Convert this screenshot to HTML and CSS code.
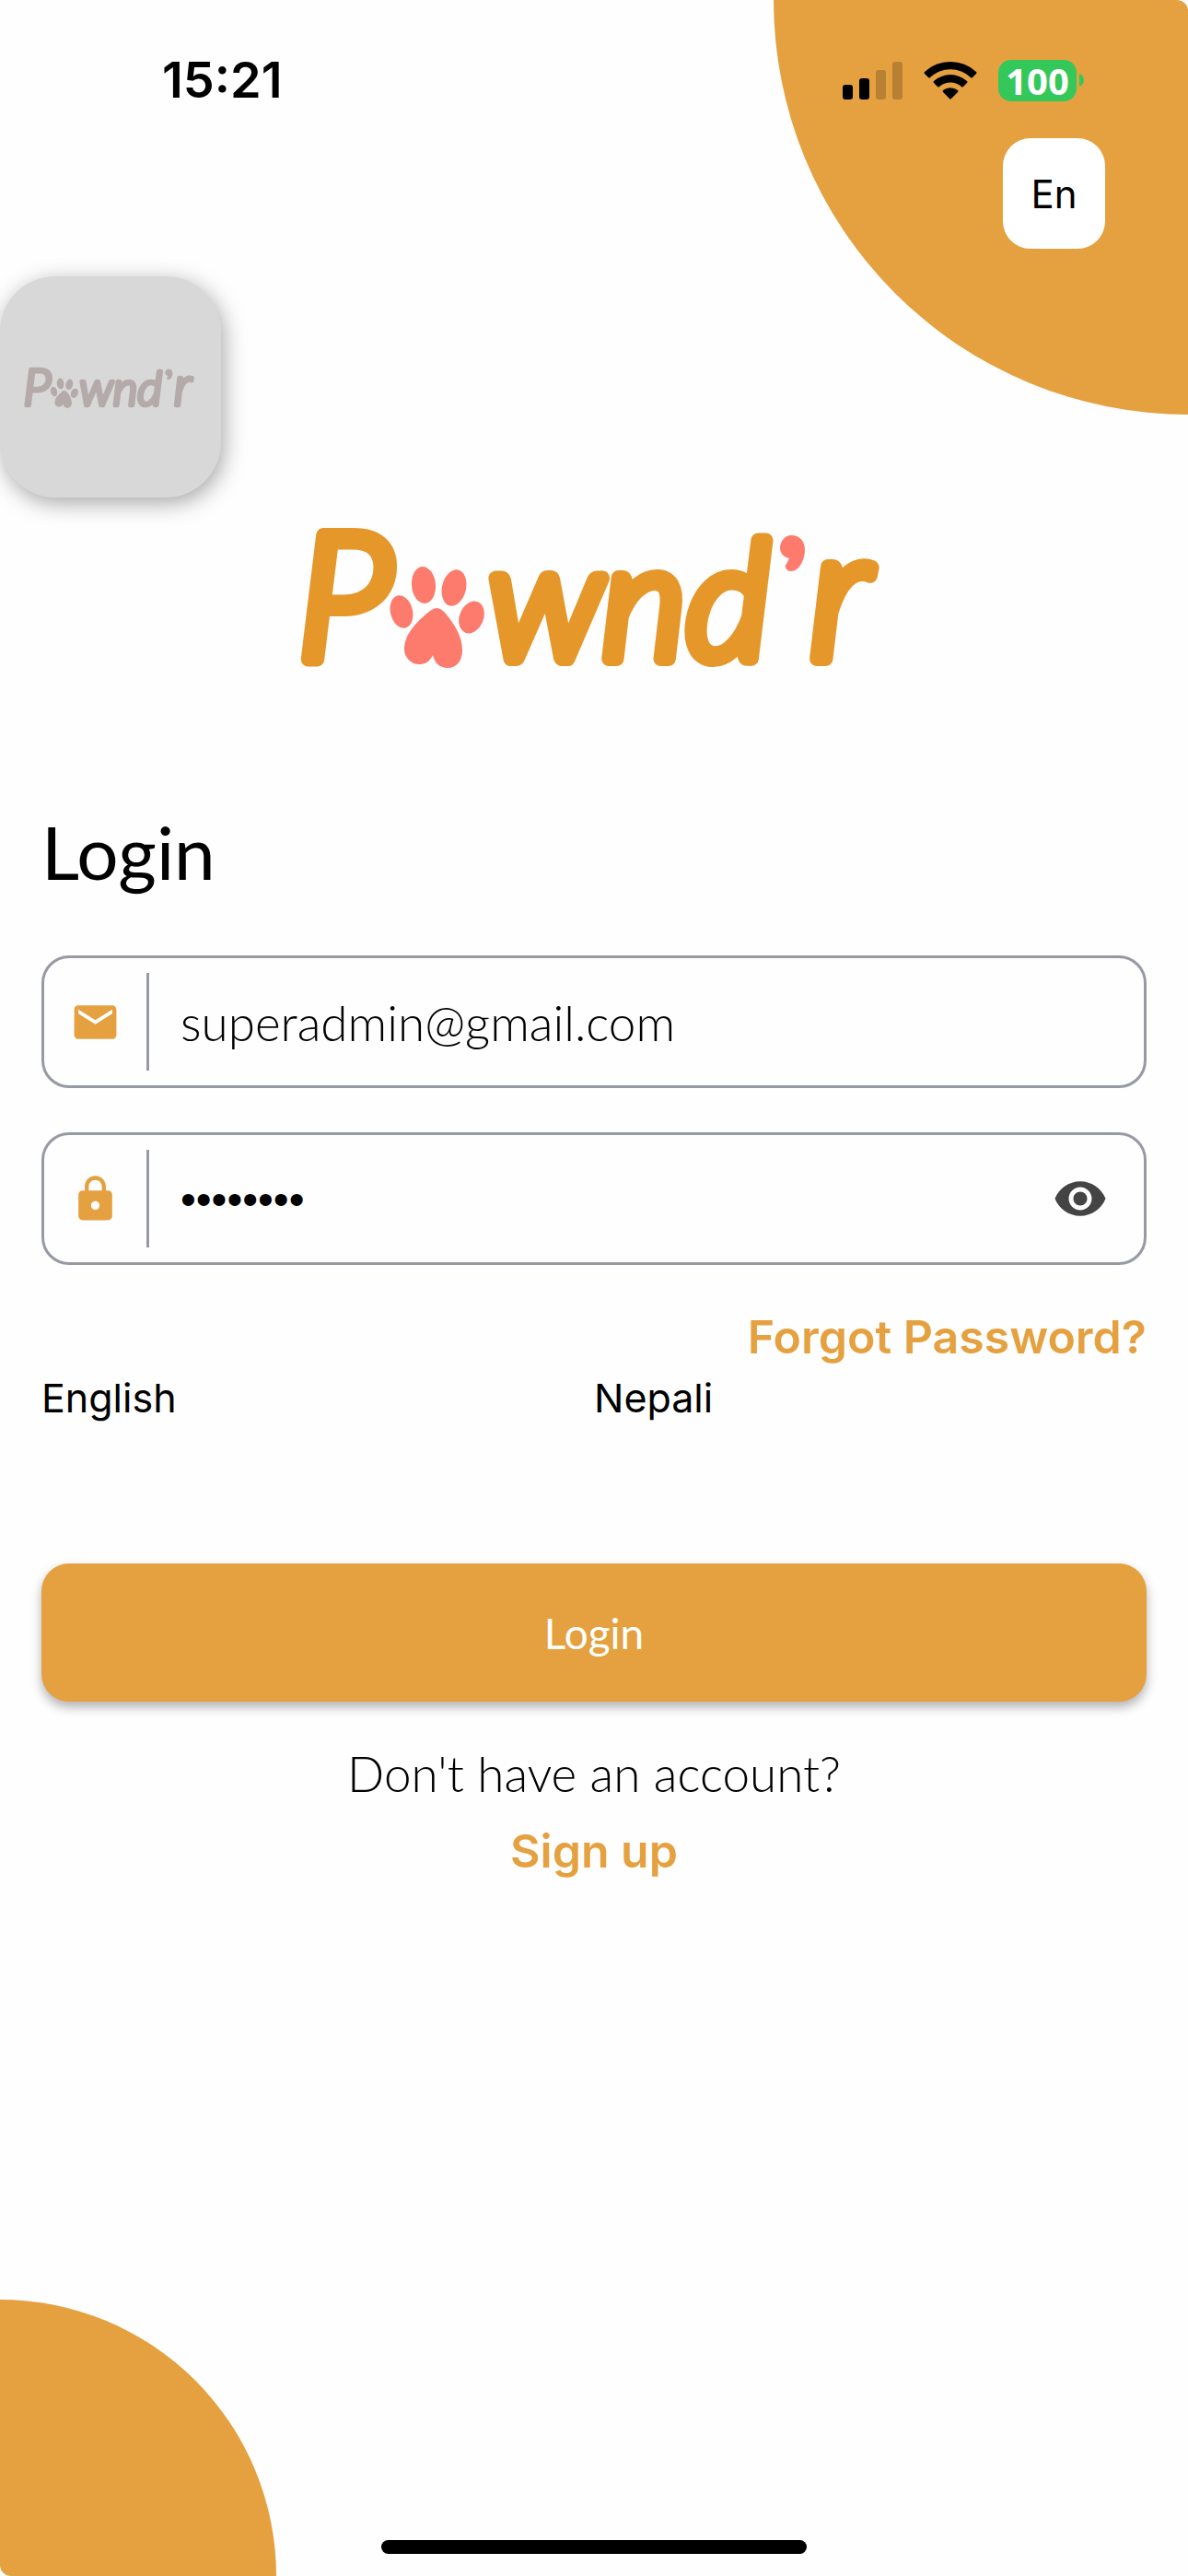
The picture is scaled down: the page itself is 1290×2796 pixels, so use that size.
FILE: index.html
```html
<!DOCTYPE html>
<html lang="en">
<head>
<meta charset="utf-8">
<meta name="viewport" content="width=device-width, initial-scale=1">
<title>Pawnd'r – Login</title>
<link rel="stylesheet" href="styles.css">
</head>
<body>
<div class="screen">
  <div class="corner corner-top"></div>
  <div class="corner corner-bottom"></div>

  <header class="status">
    <span class="clock">15:21</span>
    <div class="indicators">
      <svg class="signal" viewBox="0 0 65 42" aria-hidden="true">
        <rect x="0" y="26" width="11" height="16" rx="3"/>
        <rect x="18" y="19" width="11" height="23" rx="3"/>
        <rect x="36" y="10" width="11" height="32" rx="3" opacity=".2"/>
        <rect x="54" y="1" width="11" height="41" rx="3" opacity=".2"/>
      </svg>
      <svg class="wifi" viewBox="0 0 58 42" aria-hidden="true">
        <path d="M1 12Q0 13 1 14L5 18Q6 19 7 18A32 32 0 0 1 51 18Q52 19 53 18L57 14Q58 13 57 12A41 41 0 0 0 1 12Z"/>
        <path d="M11 22Q10 23 11 24L15 28Q16 29 17 28A18 18 0 0 1 41 28Q42 29 43 28L47 24Q48 23 47 22A27 27 0 0 0 11 22Z"/>
        <path d="M21 32Q20 33 21 34L28 41Q29 42 30 41L37 34Q38 33 37 32A13 13 0 0 0 21 32Z"/>
      </svg>
      <div class="battery"><span class="level">100</span><svg class="nub" viewBox="0 0 5 14" aria-hidden="true"><path d="M0 0Q5 2 5 7T0 14Z"/></svg></div>
    </div>
  </header>

  <div class="language-bar"><button class="language" type="button">En</button></div>

  <button class="floating" type="button" aria-label="Pawnd'r menu">
    <svg class="floating-logo" viewBox="0 0 660 170" aria-hidden="true">
      <g class="letters">
        <text class="initial" x="8" y="153">P</text>
        <text class="rest" x="215" y="153">wnd</text>
        <text class="last" x="564" y="153">r</text>
      </g>
      <g id="paw" class="paw">
        <ellipse cx="121" cy="102" rx="12" ry="18" transform="rotate(-14 121 102)"/>
        <ellipse cx="145" cy="73" rx="13" ry="20" transform="rotate(-5 145 73)"/>
        <ellipse cx="178" cy="76" rx="13" ry="20" transform="rotate(13 178 76)"/>
        <ellipse cx="197" cy="108" rx="13" ry="18" transform="rotate(22 197 108)"/>
        <path d="M159 98Q164 98 169 104C178 115 187 128 187 144C187 156 180 163 171 163C163 163 157 158 155 149C151 157 146 159 140 159C131 159 124 151 124 143C124 127 136 115 147 105Q155 98 159 98Z"/>
        <path d="M544 19C553 19 559 25 559 35C559 45 553 58 544 58C539 58 536 53 539 50L542 44C537 43 532 39 532 33C532 25 538 19 544 19Z"/>
      </g>
    </svg>
  </button>

  <main class="content">
    <svg class="logo" viewBox="0 0 660 170" role="img" aria-label="Pawnd'r">
      <g class="letters">
        <text class="initial" x="8" y="153">P</text>
        <text class="rest" x="215" y="153">wnd</text>
        <text class="last" x="564" y="153">r</text>
      </g>
      <use href="#paw"/>
    </svg>

    <h1 class="title">Login</h1>

    <form class="form">
      <div class="field">
        <label class="field-icon" for="email" aria-label="Email">
          <svg class="icon" viewBox="0 0 24 24"><path d="M20 4H4c-1.100 0-1.990.9-1.990 2L2 18c0 1.100.9 2 2 2h16c1.100 0 2-.9 2-2V6c0-1.100-.9-2-2-2zm0 4l-8 5-8-5V6l8 5 8-5v2z"/></svg>
        </label>
        <input class="input" id="email" type="email" value="superadmin@gmail.com">
      </div>
      <div class="field">
        <label class="field-icon" for="password" aria-label="Password">
          <svg class="icon" viewBox="0 0 24 24"><path d="M18 8h-1V6c0-2.760-2.240-5-5-5S7 3.240 7 6v2H6c-1.100 0-2 .9-2 2v10c0 1.100.9 2 2 2h12c1.100 0 2-.9 2-2V10c0-1.100-.9-2-2-2zm-6 9c-1.100 0-2-.9-2-2s.9-2 2-2 2 .9 2 2-.9 2-2 2zm3.100-9H8.900V6c0-1.710 1.390-3.100 3.100-3.100s3.100 1.390 3.100 3.100v2z"/></svg>
        </label>
        <input class="input password" id="password" type="password" value="pawndr12">
        <button class="reveal" type="button" aria-label="Show password">
          <svg class="eye" viewBox="0 0 24 24"><path d="M12 4.500C7 4.500 2.730 7.610 1 12c1.730 4.390 6 7.500 11 7.500s9.270-3.110 11-7.500c-1.730-4.390-6-7.500-11-7.500zM12 17c-2.760 0-5-2.240-5-5s2.240-5 5-5 5 2.240 5 5-2.240 5-5 5zm0-8c-1.660 0-3 1.340-3 3s1.340 3 3 3 3-1.340 3-3-1.340-3-3-3z"/></svg>
        </button>
      </div>
      <a class="link forgot" href="#">Forgot Password?</a>
      <div class="languages"><span>English</span><span>Nepali</span></div>
      <button class="submit" type="submit">Login</button>
    </form>

    <p class="prompt">Don't have an account?</p>
    <a class="link" href="#">Sign up</a>
  </main>

  <div class="home-indicator"></div>
</div>
</body>
</html>
```
FILE: styles.css
```css
* { box-sizing: border-box; }

body {
  margin: 0;
  background: #fff;
  color: #000;
  font-family: Inter, "Liberation Sans", sans-serif;
}

button, input {
  font: inherit;
  color: inherit;
  border: 0;
  padding: 0;
  background: none;
}

.screen {
  position: relative;
  display: flex;
  flex-direction: column;
  min-height: 100vh;
  overflow: hidden;
  background: #fefefe;
}

/* decorative quarter circles */
.corner { position: absolute; background: #e5a140; }
.corner-top {
  top: 0;
  right: 0;
  width: 450px;
  height: 450px;
  border-radius: 0 12px 0 100%;
}
.corner-bottom {
  bottom: 0;
  left: 0;
  width: 300px;
  height: 300px;
  border-radius: 0 100% 0 12px;
}

.status {
  position: relative;
  display: flex;
  justify-content: space-between;
  align-items: center;
  height: 110px;
  padding: 64px 113px 0 176px;
}
.clock { font-size: 54px; line-height: 46px; font-weight: 600; }
.indicators { display: flex; align-items: center; gap: 23px; }
.signal { width: 65px; height: 42px; }
.wifi { width: 58px; height: 42px; }
.battery { display: flex; align-items: center; gap: 3px; }
.level {
  width: 85px;
  border-radius: 14px;
  background: #34c759;
  color: #fff;
  font: bold 40px/45px "Noto Sans", sans-serif;
  text-align: center;
}
.nub { width: 5px; height: 14px; fill: #34c759; }

.language-bar {
  position: relative;
  display: flex;
  justify-content: flex-end;
  padding: 40px 90px 0;
}
.language {
  width: 111px;
  height: 120px;
  border-radius: 30px;
  background: #fff;
  font-size: 42px;
}

.letters {
  fill: currentColor;
  stroke: currentColor;
  stroke-width: 16px;
  stroke-linejoin: round;
  stroke-linecap: round;
  font-family: Lato, sans-serif;
  font-style: italic;
  font-weight: 300;
}
.initial { font-size: 190px; }
.rest { font-size: 176px; }
.last { font-size: 200px; }
.paw { fill: var(--paw); }

.floating {
  position: absolute;
  top: 300px;
  left: 0;
  display: grid;
  place-items: center;
  width: 240px;
  height: 240px;
  border-radius: 60px;
  background: #d8d8d8;
  box-shadow: 3px 6px 24px rgba(0, 0, 0, .35);
}
.floating-logo {
  width: 196px;
  height: 50px;
  overflow: visible;
  color: #b5aaaa;
  --paw: #b5aaaa;
}

.content {
  position: relative;
  display: flex;
  flex-direction: column;
  align-items: center;
  padding: 292px 45px 60px;
}
.logo {
  width: 660px;
  height: 170px;
  overflow: visible;
  color: #e69729;
  --paw: #fc7b6c;
}

.title {
  align-self: flex-start;
  margin: 144px 0 65px;
  font: normal 80px/96px Lato, sans-serif;
}

.form {
  display: flex;
  flex-direction: column;
  width: 100%;
}
.field {
  display: flex;
  align-items: center;
  height: 144px;
  margin-bottom: 48px;
  border: 3px solid #979aa3;
  border-radius: 30px;
}
.field-icon {
  display: grid;
  place-items: center;
  width: 114px;
  height: 106px;
  border-right: 3px solid #979aa3;
}
.icon { width: 55px; height: 55px; fill: #e5a140; }
.input {
  flex: 1;
  min-width: 0;
  height: 100%;
  padding: 0 34px;
  font-family: Lato, sans-serif;
  font-size: 53px;
  font-weight: 300;
  outline: 0;
}
.password { font-family: "Liberation Sans", sans-serif; font-size: 48px; }
.reveal {
  display: grid;
  place-items: center;
  width: 60px;
  height: 60px;
  margin-right: 39px;
}
.eye { width: 60px; height: 60px; fill: #444; }

.link {
  color: #e5a140;
  font-size: 50px;
  line-height: 60px;
  font-weight: 600;
  text-decoration: none;
}
.forgot { align-self: flex-end; }

.languages {
  display: grid;
  grid-template-columns: 1fr 1fr;
  margin: 6px 0 150px;
  font-size: 43px;
  line-height: 60px;
}

.submit {
  height: 150px;
  border-radius: 30px;
  background: #e5a140;
  box-shadow: 0 6px 12px rgba(0, 0, 0, .3);
  color: #fff;
  font-family: Lato, sans-serif;
  font-size: 46px;
}

.prompt {
  margin: 48px 0 24px;
  font: 300 53px/60px Lato, sans-serif;
}

.home-indicator {
  position: relative;
  align-self: center;
  width: 462px;
  height: 15px;
  margin: auto 0 24px;
  border-radius: 8px;
  background: #000;
}
```
